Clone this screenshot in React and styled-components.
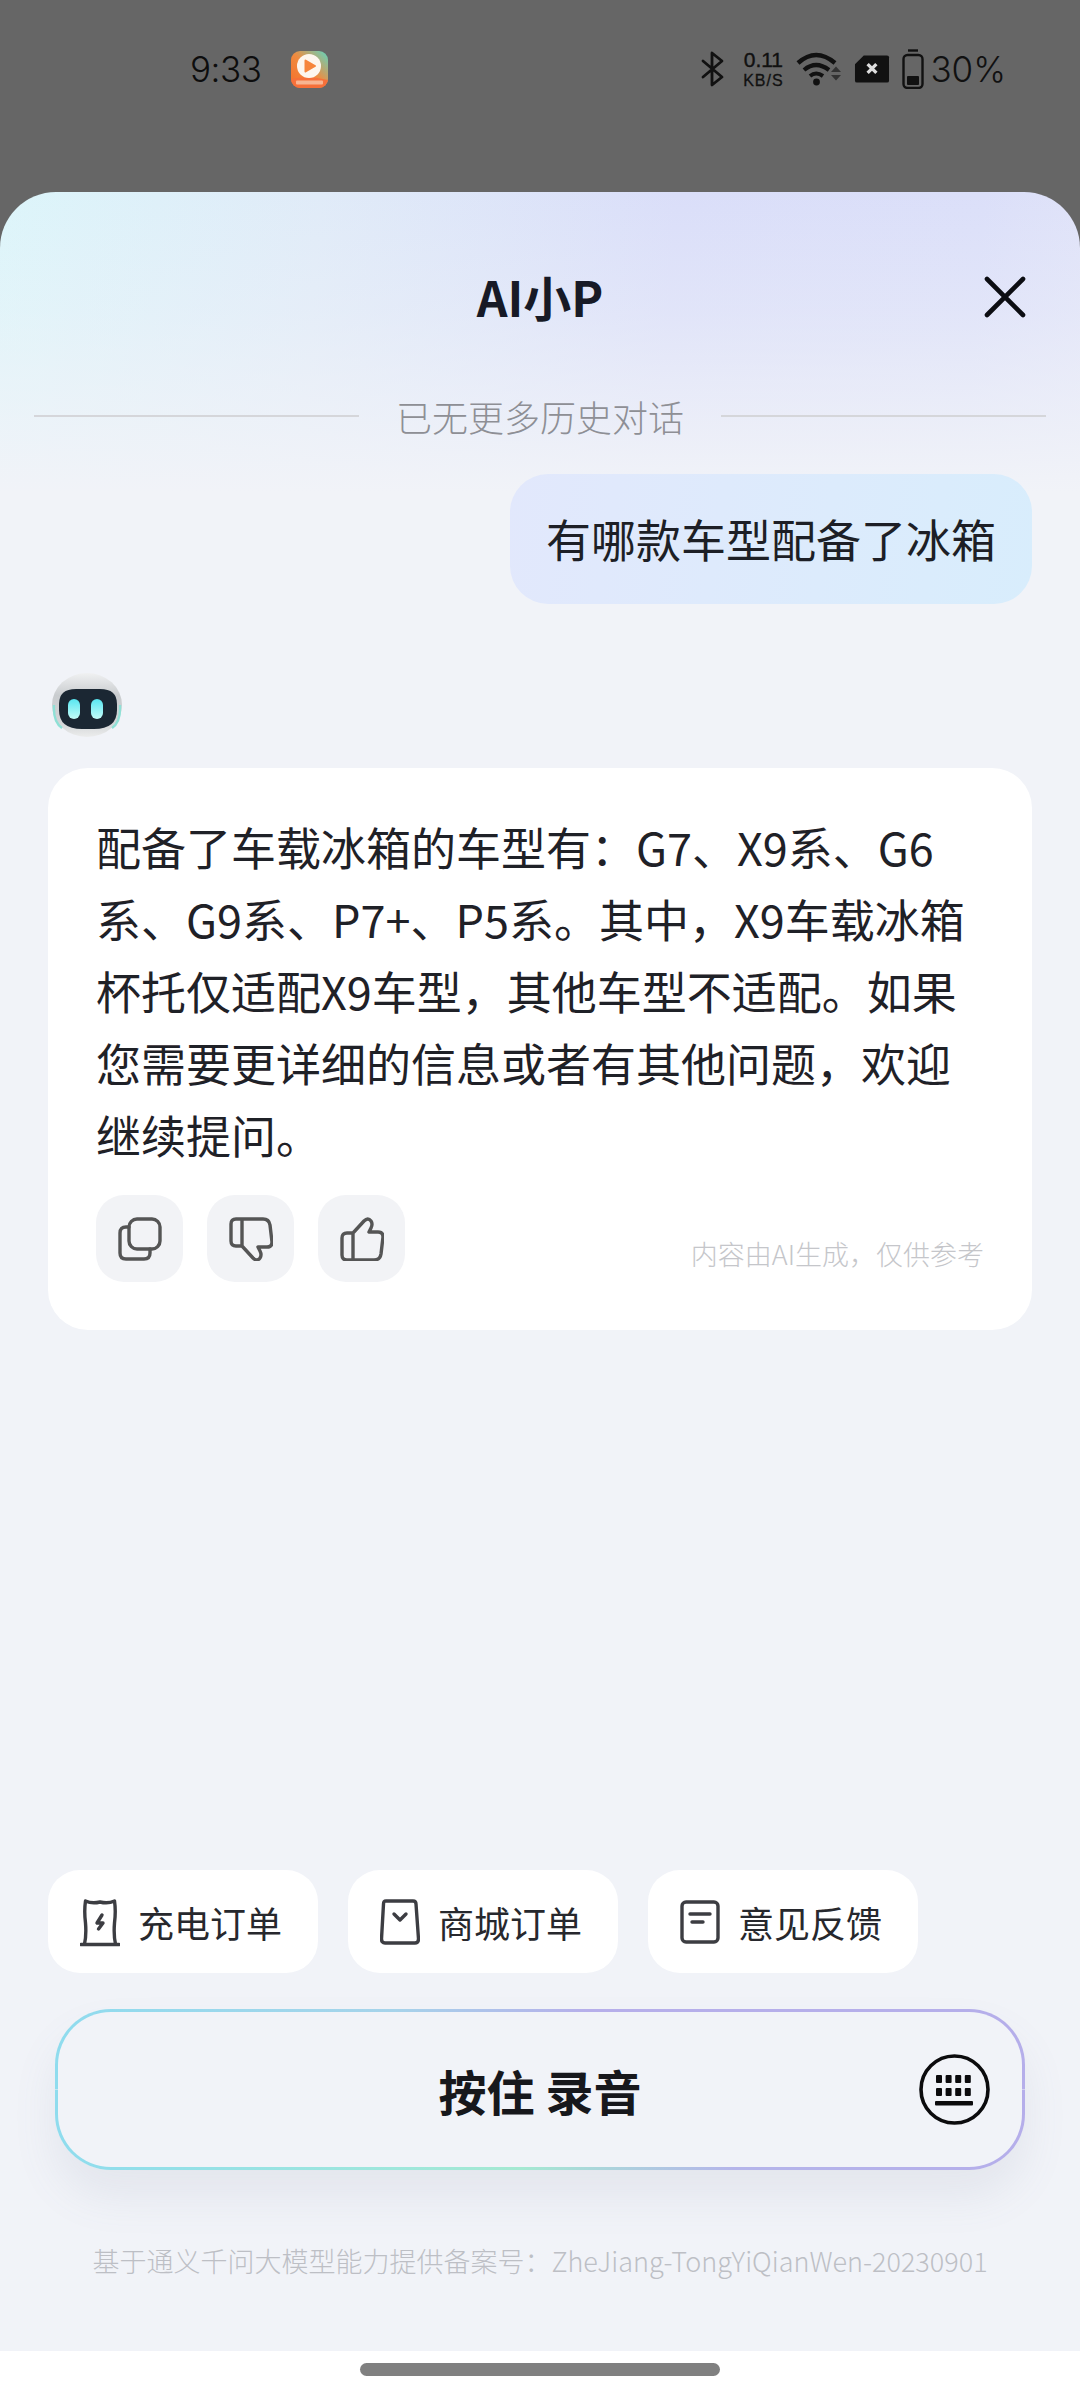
import React from "react";
import styled, { createGlobalStyle } from "styled-components";

const Global = createGlobalStyle`
  html, body { margin: 0; padding: 0; background: #666; }
  * { box-sizing: border-box; }
  body { font-family: "Noto Sans CJK SC", "Noto Sans", sans-serif; }
`;
const Page = styled.div`
  width: 1080px; height: 2400px; display: flex; flex-direction: column;
  background: #666666; overflow: hidden;
`;
const StatusBar = styled.div`
  height: 192px; flex: none; display: flex; justify-content: space-between; align-items: flex-start;
  padding: 45px 74px 0 190px; color: #111;
`;
const StatusGroup = styled.div`
  display: flex; align-items: center; height: 48px;
  gap: ${(p) => p.$gap || 0}px;
`;
const Clock = styled.span`
  font-family: Inter, sans-serif; font-weight: 300; font-size: 35px; letter-spacing: -0.5px; line-height: 48px; color: #0d0d0d;
`;
const Speed = styled.div`
  display: flex; flex-direction: column; align-items: center; font-family: "Liberation Sans", sans-serif; color: #111;
  width: 42px; margin-left: 5px;
`;
const SpeedValue = styled.span`font-size: 21px; font-weight: 400; -webkit-text-stroke: .4px #111; line-height: normal;`;
const SpeedUnit = styled.span`font-size: 16px; font-weight: 400; letter-spacing: 1px; -webkit-text-stroke: .3px #111; line-height: normal; white-space: nowrap;`;
const Percent = styled.span`
  font-family: Inter, sans-serif; font-weight: 300; font-size: 35px; line-height: 48px; color: #111; margin-left: -6px;
`;
const Sheet = styled.div`
  flex: 1; display: flex; flex-direction: column; border-radius: 56px 56px 0 0;
  background:
    linear-gradient(180deg, rgba(241,243,248,0) 0, rgba(241,243,248,.3) 120px, #f1f3f8 300px),
    linear-gradient(94deg, #dcf5fa 0, #e0ebf8 26%, #dadef9 55%, #dbdff9 80%, #e5e7f8 100%);
  background-color: #f1f3f8;
`;
const Header = styled.div`
  height: 210px; display: grid; grid-template-columns: 1fr auto 1fr; align-items: center;
`;
const Title = styled.h1`
  grid-column: 2; margin: 0 0 3px; font-size: 48px; font-weight: 700; color: #171a26; line-height: 1;
  font-family: "Noto Sans CJK SC", sans-serif;
`;
const Close = styled.div`
  grid-column: 3; justify-self: end; margin-right: 54px; width: 42px; height: 42px; display: flex;
`;
const HistoryDivider = styled.div`
  height: 28px; display: flex; align-items: center; padding: 0 34px; gap: 37px;
`;
const Rule = styled.div`flex: 1; height: 2px; background: #d5d6da;`;
const HistoryText = styled.span`
  font-size: 36px; line-height: 28px; color: #8e8f95; font-weight: 300; white-space: nowrap;
`;
const UserRow = styled.div`display: flex; justify-content: flex-end; padding: 44px 48px 0;`;
const UserBubble = styled.div`
  height: 130px; width: 522px; display: flex; align-items: center; justify-content: center;
  font-size: 45px; color: #1d1f26; border-radius: 38px; font-weight: 400; padding-bottom: 2px;
  background: linear-gradient(100deg, #e2e8fc, #d8edfc);
`;
const Avatar = styled.div`margin: 68px 0 30px 52px; width: 70px; height: 66px;`;
const Card = styled.div`
  margin: 0 48px; height: 562px; border-radius: 40px; background: #fff; padding: 43px 48px 48px 48px;
  display: flex; flex-direction: column;
`;
const Answer = styled.div`
  font-size: 45px; line-height: 72px; color: #1f2127; height: 360px; white-space: nowrap; font-weight: 400;
`;
const ActionRow = styled.div`display: flex; align-items: flex-end; gap: 24px; margin-top: 24px;`;
const IconButton = styled.div`
  width: 87px; height: 87px; border-radius: 28px; background: #f2f3f6;
  display: flex; align-items: center; justify-content: center;
`;
const Disclaimer = styled.span`
  margin-left: auto; padding-bottom: 8px; font-size: 27px; line-height: 40px; color: #c5c6ca; font-weight: 300;
`;
const Spacer = styled.div`flex: 1;`;
const Chips = styled.div`display: flex; gap: 30px; padding-left: 48px;`;
const Chip = styled.div`
  width: 270px; height: 103px; background: #fff; border-radius: 32px; display: flex; align-items: center;
  gap: 18px; padding-left: 32px; font-size: 36px; color: #27282d;
`;
const ChipIcon = styled.div`width: 40px; height: 50px; display: flex; flex: none; align-items: center;`;
const RecordButton = styled.div`
  position: relative; margin: 36px 55px 0; height: 161px; border-radius: 56px; border: 3px solid transparent;
  display: flex; align-items: center; justify-content: center;
  background:
    linear-gradient(#f1f3f8, #f1f3f8) padding-box,
    linear-gradient(90deg, #8fdcee 0, #a6d3ea 35%, #b6aeea 55%, #b5aeea 100%) top/100% 50% no-repeat border-box,
    linear-gradient(90deg, #8fdcee 0, #9fe7dc 35%, #a5e9d2 48%, #b5b5ea 70%, #b5aeea 100%) bottom/100% 50% no-repeat border-box;
  box-shadow: 0 26px 44px rgba(110,120,150,.1);
`;
const RecordLabel = styled.span`
  font-size: 48px; font-weight: 700; color: #17181c; letter-spacing: 0;
`;
const KeyboardToggle = styled.div`
  position: absolute; top: 42px; right: 32px; width: 71px; height: 71px; display: flex;
`;
const Footer = styled.div`
  height: 181px; padding-top: 71px; text-align: center; font-size: 27px; line-height: 40px; color: #bdbfc5;
  font-weight: 300; white-space: nowrap;
`;
const HomeArea = styled.div`
  height: 49px; flex: none; background: #fff; display: flex; justify-content: center; padding-top: 12px;
`;
const HomePill = styled.div`width: 360px; height: 13px; border-radius: 7px; background: #808080;`;

const Stroke = { fill: "none", stroke: "#555", strokeWidth: 3.4, strokeLinecap: "round", strokeLinejoin: "round" };
const ChipStroke = { fill: "none", stroke: "#3c3d42", strokeWidth: 3.4, strokeLinecap: "round", strokeLinejoin: "round" };

const thumb = "M13 16 L24 4 Q28 0 31 4 Q33 7 31 11 L29 15 H38 Q43 15 43 20 L41 37 Q40 43 34 43 H7 Q2 43 2 38 V21 Q2 16 7 16 H13 V43";

const CopyIcon = () => (
  <svg width="44" height="44" viewBox="0 0 44 44" {...Stroke}>
    <rect x="11" y="2" width="31" height="30" rx="8" />
    <path d="M11 10 H8 Q2 10 2 16 V36 Q2 42 8 42 H26 Q32 42 32 36 V32" />
  </svg>
);
const DownIcon = () => (
  <svg width="44" height="44" viewBox="0 0 44 44" {...Stroke}>
    <path transform="translate(0 45) scale(1 -1)" d={thumb} />
  </svg>
);
const UpIcon = () => (
  <svg width="44" height="44" viewBox="0 0 44 44" {...Stroke}><path d={thumb} /></svg>
);
const ChargeIcon = () => (
  <svg width="40" height="50" viewBox="0 0 40 50" {...ChipStroke}>
    <path d="M1 47.5 H39 M4.5 47 Q6.5 38 5.5 26 Q4 14 5.5 4 Q12 7 20 5 Q28 7 34.5 4 Q36 14 34.5 26 Q33.5 38 35.5 47" />
    <path d="M22 18 L17 26 H23 L18.5 32" />
  </svg>
);
const BagIcon = () => (
  <svg width="40" height="46" viewBox="0 0 40 46" {...ChipStroke}>
    <path d="M6 2 H33 Q36 2 36 5 L38.5 40 Q38.5 44 35 44 H5 Q1.5 44 1.5 40 L3.5 5 Q3.5 2 6 2 Z" />
    <path d="M14 15 L20 21 L26 15" />
  </svg>
);
const NoteIcon = () => (
  <svg width="40" height="44" viewBox="0 0 40 44" {...ChipStroke}>
    <rect x="2" y="2" width="36" height="40" rx="4" />
    <path d="M10 14 H30 M12 22 H23" />
  </svg>
);
const KeyboardIcon = () => (
  <svg width="71" height="71" viewBox="0 0 71 71">
    <circle cx="35.5" cy="35.5" r="33.5" fill="none" stroke="#0b0b0d" strokeWidth="3.6" />
    {[0, 1].map((r) => [0, 1, 2, 3].map((c) => (
      <rect key={`${r}-${c}`} x={17 + c * 9.6} y={21 + r * 13} width="6" height="8" rx="1" fill="#0b0b0d" />
    )))}
    <rect x="16" y="47" width="38" height="4.5" rx="1" fill="#0b0b0d" />
  </svg>
);
const XIcon = () => (
  <svg width="42" height="42" viewBox="0 0 42 42">
    <path d="M3 3 L39 39 M39 3 L3 39" stroke="#0c0d12" strokeWidth="4.6" strokeLinecap="round" />
  </svg>
);
const RobotIcon = () => (
  <svg width="70" height="66" viewBox="0 0 70 66">
    <defs>
      <linearGradient id="shell" x1="0" y1="0" x2="0" y2="1">
        <stop offset="0" stopColor="#f0f1f2" /><stop offset=".35" stopColor="#c9cccf" /><stop offset=".8" stopColor="#d4d6d8" /><stop offset="1" stopColor="#eceded" />
      </linearGradient>
      <linearGradient id="eye" x1="0" y1="0" x2="0" y2="1">
        <stop offset="0" stopColor="#58e6f0" /><stop offset="1" stopColor="#c4fcf8" />
      </linearGradient>
    </defs>
    <ellipse cx="35" cy="33" rx="35" ry="32" fill="url(#shell)" />
    <path d="M2 33 Q1 50 10 56 M68 33 Q69 50 60 56" fill="none" stroke="#8fe0d6" strokeWidth="2.4" />
    <path d="M7 32 Q7 17 24 17 H48 Q65 17 65 32 V38 Q65 57 42 57 H30 Q7 57 7 38 Z" fill="#1b2733" />
    <rect x="16" y="27" width="12" height="20" rx="6" fill="url(#eye)" />
    <rect x="39" y="27" width="12" height="20" rx="6" fill="url(#eye)" />
  </svg>
);
const AppIcon = () => (
  <svg width="37" height="37" viewBox="0 0 37 37" style={{ marginLeft: 30 }}>
    <defs>
      <linearGradient id="app" x1="0" y1="1" x2="1" y2="0">
        <stop offset="0" stopColor="#f66d2a" /><stop offset=".5" stopColor="#f08b3f" /><stop offset="1" stopColor="#5fd6c0" />
      </linearGradient>
      <clipPath id="appClip"><rect width="37" height="37" rx="9" /></clipPath>
    </defs>
    <g clipPath="url(#appClip)">
      <rect width="37" height="37" fill="url(#app)" />
      <path d="M0 28 Q18 24 37 29 V37 H0 Z" fill="#f6703a" />
      <rect x="5" y="29.5" width="27" height="4" rx="1" fill="#f8b592" />
      <circle cx="18" cy="15" r="12" fill="#fdf6ee" />
      <path d="M14.5 9.5 L24 15 L14.5 20.5 Z" fill="#f6853c" stroke="#f6853c" strokeWidth="2" strokeLinejoin="round" />
    </g>
  </svg>
);
const BluetoothIcon = () => (
  <svg width="24" height="36" viewBox="0 0 24 36" fill="none" stroke="#111" strokeWidth="2.8" strokeLinejoin="round" strokeLinecap="round">
    <path d="M2 10 L21 26 L11 34 V2 L21 10 L2 26" />
  </svg>
);
const WifiIcon = () => (
  <svg width="46" height="36" viewBox="0 0 46 36" fill="none">
    <path d="M2 12 Q20 -4 39 12" stroke="#111" strokeWidth="4.4" />
    <path d="M8 19 Q20 9 33 19" stroke="#111" strokeWidth="4.2" />
    <path d="M14 25 Q20 20 27 25" stroke="#111" strokeWidth="4" />
    <circle cx="20.5" cy="31" r="3.4" fill="#111" />
    <path d="M35 21 L40 15.5 L45 21 Z M35 24 L40 29.5 L45 24 Z" fill="#333" />
  </svg>
);
const SimIcon = () => (
  <svg width="36" height="30" viewBox="0 0 37 30">
    <path d="M10 1 H34 Q36 1 36 3 V27 Q36 29 34 29 H3 Q1 29 1 27 V10 Z" fill="#111" />
    <path d="M14 10 L23 19 M23 10 L14 19" stroke="#ddd" strokeWidth="3.4" />
  </svg>
);
const BatteryIcon = () => (
  <svg width="22" height="40" viewBox="0 0 22 40" fill="none">
    <path d="M6 1.5 H16" stroke="#111" strokeWidth="2.4" />
    <rect x="1.5" y="6" width="19" height="33" rx="4" stroke="#111" strokeWidth="2.4" />
    <rect x="5" y="27" width="12" height="9" rx="1" fill="#111" />
  </svg>
);

export default function App() {
  return (
    <Page>
      <Global />
      <StatusBar>
        <StatusGroup>
          <Clock>9:33</Clock>
          <AppIcon />
        </StatusGroup>
        <StatusGroup $gap={12}>
          <BluetoothIcon />
          <Speed><SpeedValue>0.11</SpeedValue><SpeedUnit>KB/S</SpeedUnit></Speed>
          <WifiIcon />
          <SimIcon />
          <BatteryIcon />
          <Percent>30%</Percent>
        </StatusGroup>
      </StatusBar>
      <Sheet>
        <Header>
          <Title>AI小P</Title>
          <Close><XIcon /></Close>
        </Header>
        <HistoryDivider>
          <Rule />
          <HistoryText>已无更多历史对话</HistoryText>
          <Rule />
        </HistoryDivider>
        <UserRow><UserBubble>有哪款车型配备了冰箱</UserBubble></UserRow>
        <Avatar><RobotIcon /></Avatar>
        <Card>
          <Answer>
            配备了车载冰箱的车型有：G7、X9系、G6<br />
            系、G9系、P7+、P5系。其中，X9车载冰箱<br />
            杯托仅适配X9车型，其他车型不适配。如果<br />
            您需要更详细的信息或者有其他问题，欢迎<br />
            继续提问。
          </Answer>
          <ActionRow>
            <IconButton><CopyIcon /></IconButton>
            <IconButton><DownIcon /></IconButton>
            <IconButton><UpIcon /></IconButton>
            <Disclaimer>内容由AI生成，仅供参考</Disclaimer>
          </ActionRow>
        </Card>
        <Spacer />
        <Chips>
          <Chip><ChipIcon><ChargeIcon /></ChipIcon>充电订单</Chip>
          <Chip><ChipIcon><BagIcon /></ChipIcon>商城订单</Chip>
          <Chip><ChipIcon><NoteIcon /></ChipIcon>意见反馈</Chip>
        </Chips>
        <RecordButton>
          <RecordLabel>按住 录音</RecordLabel>
          <KeyboardToggle><KeyboardIcon /></KeyboardToggle>
        </RecordButton>
        <Footer>基于通义千问大模型能力提供备案号：ZheJiang-TongYiQianWen-20230901</Footer>
      </Sheet>
      <HomeArea><HomePill /></HomeArea>
    </Page>
  );
}
